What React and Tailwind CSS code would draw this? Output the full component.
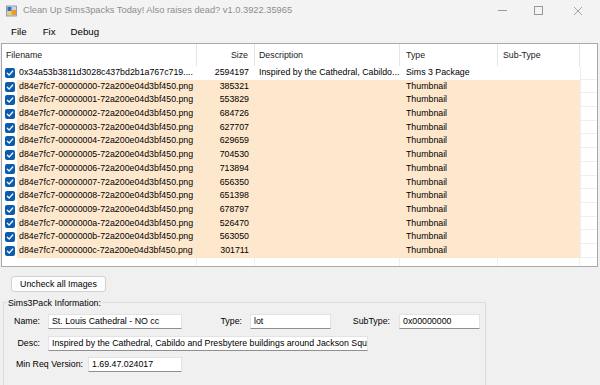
import React from "react";

const rows = [
  { name: "0x34a53b3811d3028c437bd2b1a767c719....", size: "2594197", desc: "Inspired by the Cathedral, Cabildo...", type: "Sims 3 Package", pkg: true },
  { name: "d84e7fc7-00000000-72a200e04d3bf450.png", size: "385321" },
  { name: "d84e7fc7-00000001-72a200e04d3bf450.png", size: "553829" },
  { name: "d84e7fc7-00000002-72a200e04d3bf450.png", size: "684726" },
  { name: "d84e7fc7-00000003-72a200e04d3bf450.png", size: "627707" },
  { name: "d84e7fc7-00000004-72a200e04d3bf450.png", size: "629659" },
  { name: "d84e7fc7-00000005-72a200e04d3bf450.png", size: "704530" },
  { name: "d84e7fc7-00000006-72a200e04d3bf450.png", size: "713894" },
  { name: "d84e7fc7-00000007-72a200e04d3bf450.png", size: "656350" },
  { name: "d84e7fc7-00000008-72a200e04d3bf450.png", size: "651398" },
  { name: "d84e7fc7-00000009-72a200e04d3bf450.png", size: "678797" },
  { name: "d84e7fc7-0000000a-72a200e04d3bf450.png", size: "526470" },
  { name: "d84e7fc7-0000000b-72a200e04d3bf450.png", size: "563050" },
  { name: "d84e7fc7-0000000c-72a200e04d3bf450.png", size: "301711" },
];

function Check() {
  return (
    <div className="flex h-[10px] w-[10px] items-center justify-center rounded-[2px] bg-[#0b5cad]">
      <svg width="8" height="8" viewBox="0 0 8 8" fill="none">
        <path d="M1.3 4.2 L3.2 6 L6.8 2" stroke="white" strokeWidth="1.2" strokeLinecap="round" strokeLinejoin="round" />
      </svg>
    </div>
  );
}

function TextBox({ value, className }) {
  return (
    <div className={`h-[15px] overflow-hidden whitespace-nowrap border border-[#e3e3e3] border-b-[#8f8f8f] bg-white pl-[3px] leading-[13px] ${className}`}>
      {value}
    </div>
  );
}

export default function App() {
  return (
    <div className="h-[385px] w-[600px] overflow-hidden bg-[#f0f0f0] text-[8.8px] text-black" style={{ fontFamily: '"Liberation Sans", Arial, sans-serif' }}>
      {/* title bar */}
      <div className="flex h-[21px] items-center bg-[#f3f3f3]">
        <svg className="ml-[6px]" width="12" height="12" viewBox="0 0 12 12">
          <rect x="0.5" y="1" width="10" height="10" fill="#c9d6e6" stroke="#7d8da3" strokeWidth="0.8" />
          <rect x="1.5" y="2" width="4" height="4" fill="#2f6fc4" />
          <rect x="5.5" y="5" width="4.5" height="5" fill="#f19a2a" />
          <rect x="1.5" y="6.5" width="3.5" height="3.5" fill="#f2d14b" />
        </svg>
        <span className="ml-[5px] text-[9.3px] text-[#8e8e8e]">Clean Up Sims3packs Today! Also raises dead? v1.0.3922.35965</span>
        <div className="ml-auto flex items-center">
          <div className="flex w-[36px] justify-center">
            <div className="h-px w-[9px] bg-[#9a9a9a]" />
          </div>
          <div className="flex w-[36px] justify-center">
            <div className="h-[9px] w-[9px] border border-[#9a9a9a]" />
          </div>
          <div className="flex w-[44px] justify-center">
            <svg width="10" height="10" viewBox="0 0 10 10">
              <path d="M1 1 L9 9 M9 1 L1 9" stroke="#9a9a9a" strokeWidth="0.9" />
            </svg>
          </div>
        </div>
      </div>

      {/* menu */}
      <div className="flex h-[22px] items-center bg-[#f3f3f3] text-[9.7px]">
        <span className="ml-[11px]">File</span>
        <span className="ml-[16px]">Fix</span>
        <span className="ml-[15px]">Debug</span>
      </div>

      {/* file list */}
      <div className="ml-[1px] w-[597px] border border-[#a9a9a9] bg-white">
        <div className="flex h-[22px] items-center text-[#1a1a1a]">
          <div className="h-full w-[195px] border-r border-[#e5e5e5] pl-[4px] leading-[22px]">Filename</div>
          <div className="h-full w-[58px] border-r border-[#e5e5e5] pr-[6px] text-right leading-[22px]">Size</div>
          <div className="h-full w-[145px] border-r border-[#e5e5e5] pl-[4px] leading-[22px]">Description</div>
          <div className="h-full w-[98px] border-r border-[#e5e5e5] pl-[6px] leading-[22px]">Type</div>
          <div className="h-full w-[82px] border-r border-[#e5e5e5] pl-[5px] leading-[22px]">Sub-Type</div>
          <div className="h-full w-[17px]" />
        </div>

        {rows.map((r) => (
          <div key={r.name} className="flex h-[13.7px] items-center leading-[13.7px]">
            <div className="flex h-full w-[15px] items-center pl-[3px]">
              <Check />
            </div>
            <div className={`flex h-full ${r.pkg ? "bg-white" : "bg-[#fde8cd]"}`}>
              <div className="w-[180px] overflow-hidden whitespace-nowrap pl-[2px]">{r.name}</div>
              <div className="w-[58px] pr-[6px] text-right">{r.size}</div>
              <div className="w-[145px] overflow-hidden whitespace-nowrap pl-[4px]">{r.desc}</div>
              <div className="w-[98px] pl-[6px]">{r.type || "Thumbnail"}</div>
              <div className="w-[82px]" />
            </div>
            <div className="h-full w-[17px] border-b border-l border-[#efefef]" />
          </div>
        ))}

        <div className="flex h-[8px]">
          <div className="h-full w-[195px] border-r border-[#efefef]" />
          <div className="h-full w-[58px] border-r border-[#efefef]" />
          <div className="h-full w-[145px] border-r border-[#efefef]" />
          <div className="h-full w-[98px] border-r border-[#efefef]" />
          <div className="h-full w-[82px] border-r border-[#efefef]" />
        </div>
      </div>

      <button className="ml-[11px] mt-[9px] h-[16px] w-[95px] rounded-[3px] border border-[#d0d0d0] bg-[#fdfdfd] text-[8.8px] leading-[14px]">
        Uncheck all Images
      </button>

      {/* pack info */}
      <fieldset className="ml-[3px] mt-[5px] h-[100px] w-[483px] border border-[#dcdcdc] p-0">
        <legend className="ml-[3px] px-[1px] leading-[12px]">Sims3Pack Information:</legend>
        <div className="mt-[5px] flex items-center">
          <span className="w-[36px] text-right">Name:</span>
          <TextBox value="St. Louis Cathedral - NO cc" className="ml-[8px] w-[134px]" />
          <span className="w-[60px] text-right">Type:</span>
          <TextBox value="lot" className="ml-[8px] w-[81px]" />
          <span className="w-[59px] text-right">SubType:</span>
          <TextBox value="0x00000000" className="ml-[9px] w-[81px]" />
        </div>
        <div className="mt-[7px] flex items-center">
          <span className="w-[36px] text-right">Desc:</span>
          <TextBox value="Inspired by the Cathedral, Cabildo and Presbytere buildings around Jackson Square" className="ml-[8px] w-[320px]" />
        </div>
        <div className="mt-[6px] flex items-center">
          <span className="w-[79px] text-right">Min Req Version:</span>
          <TextBox value="1.69.47.024017" className="ml-[5px] w-[94px]" />
        </div>
      </fieldset>
    </div>
  );
}
